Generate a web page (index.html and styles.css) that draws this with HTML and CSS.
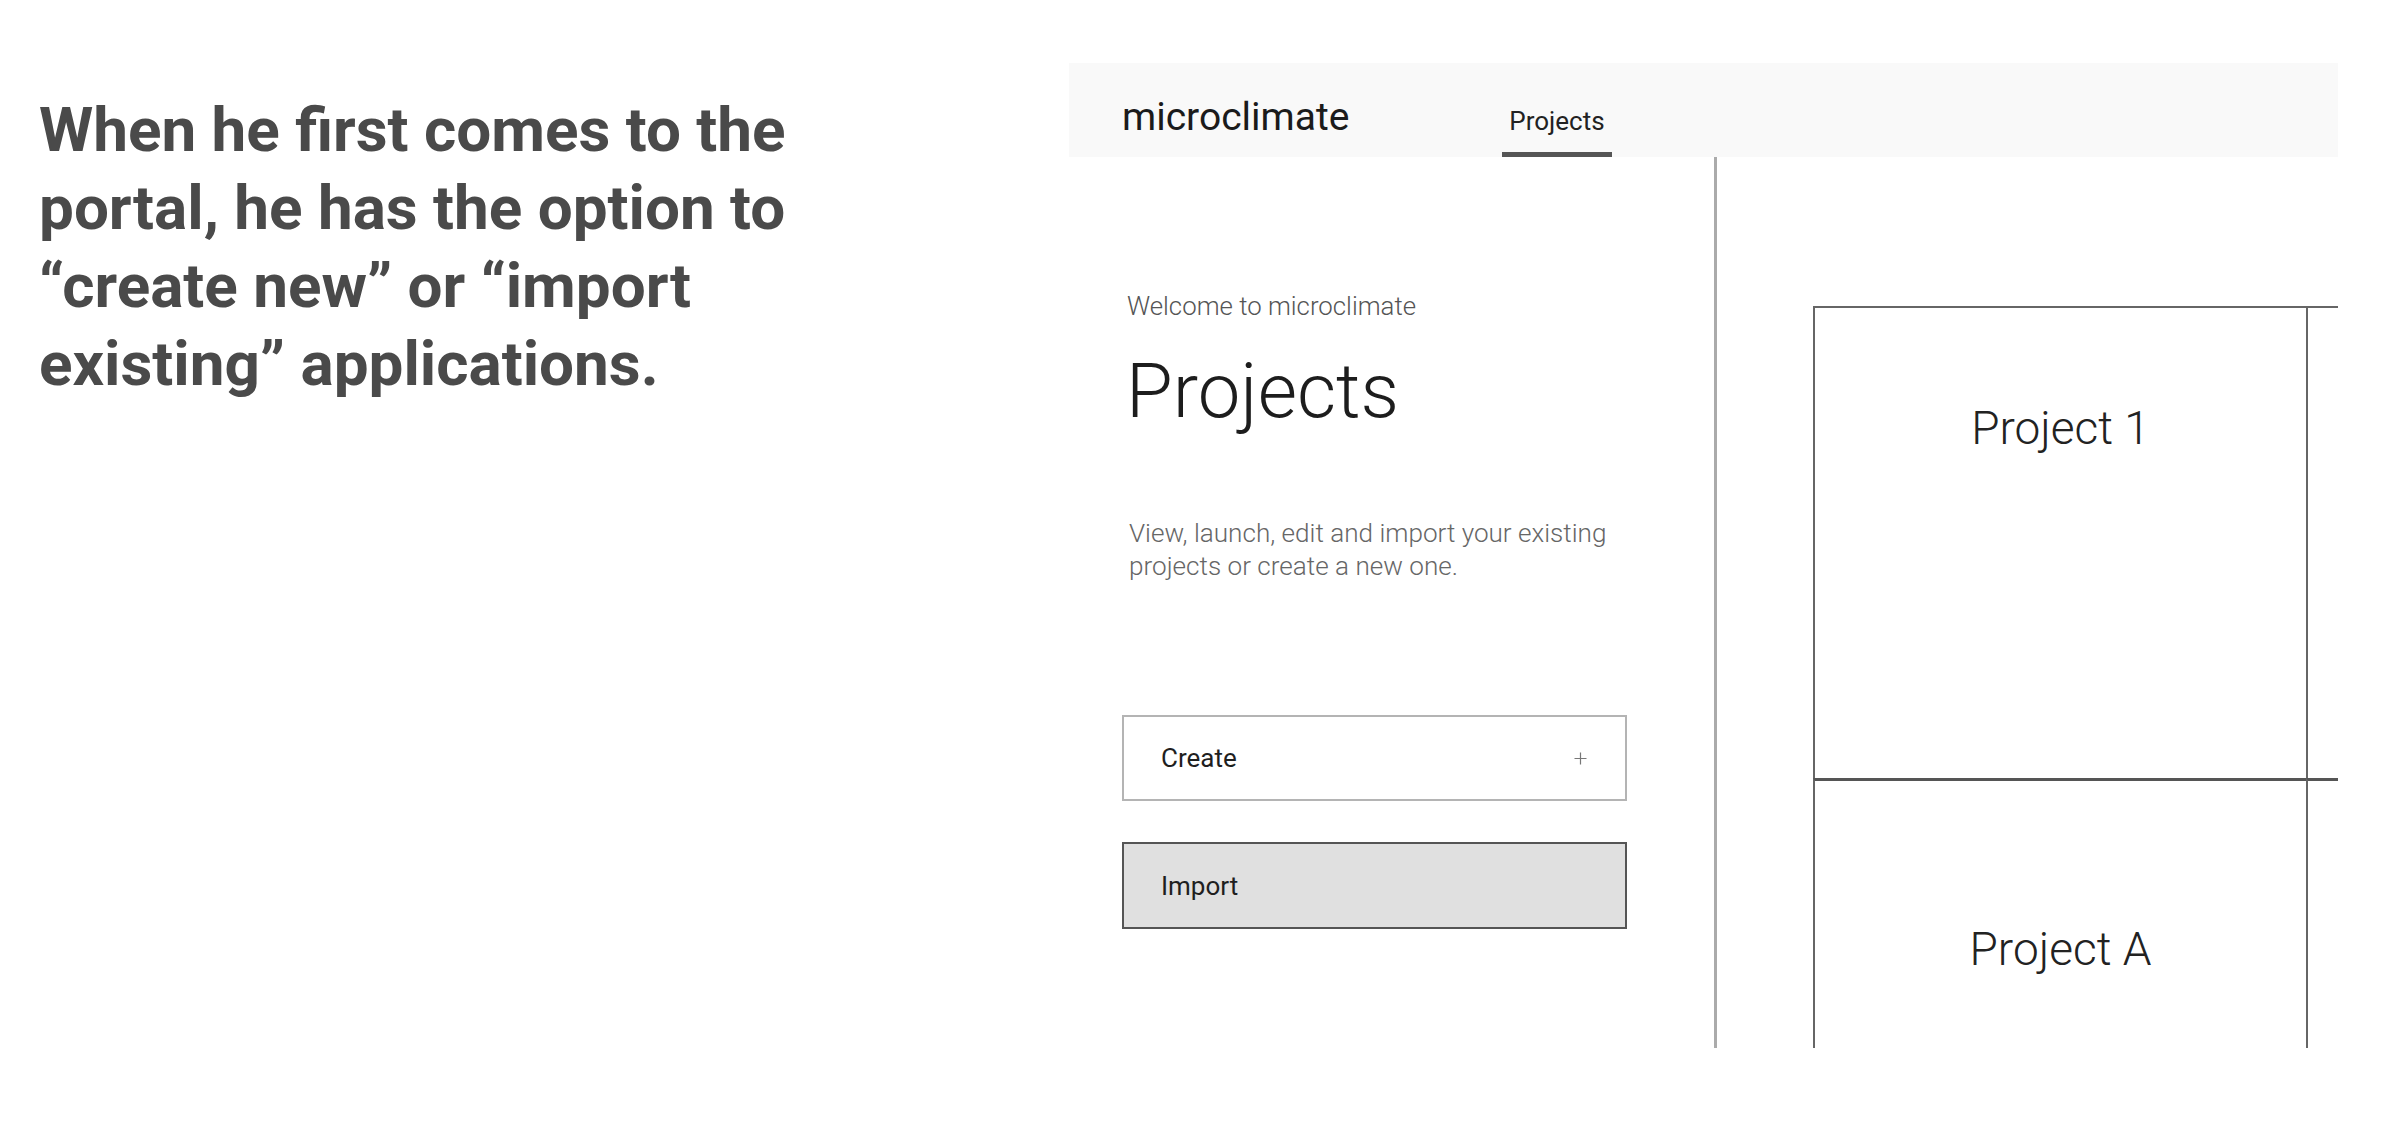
FILE: index.html
```html
<!DOCTYPE html>
<html lang="en">
<head>
<meta charset="utf-8">
<title>microclimate – Projects</title>
<link rel="stylesheet" href="styles.css">
</head>
<body>
<div class="page">
  <section class="intro">
    <p class="intro-text">When he first comes to the<br>portal, he has the option to<br>“create new” or “import<br>existing” applications.</p>
  </section>

  <section class="app">
    <header class="topbar">
      <div class="brand">microclimate</div>
      <nav class="tabs">
        <a class="tab tab-active">Projects</a>
      </nav>
    </header>

    <div class="main">
      <aside class="side">
        <div class="eyebrow">Welcome to microclimate</div>
        <h1 class="title">Projects</h1>
        <p class="desc">View, launch, edit and import your existing<br>projects or create a new one.</p>

        <div class="btn btn-create">
          <span class="btn-label">Create</span>
          <svg class="plus" width="13" height="13" viewBox="0 0 13 13" aria-hidden="true">
            <path d="M6.5 0.5V12.5M0.5 6.5H12.5" stroke="#777" stroke-width="1.2" fill="none"/>
          </svg>
        </div>
        <div class="btn btn-import">
          <span class="btn-label">Import</span>
        </div>
      </aside>

      <div class="content">
        <div class="cards">
          <div class="card card-r1"><div class="card-title card-title-1">Project 1</div></div>
          <div class="card card-r1"></div>
          <div class="card card-r2"><div class="card-title card-title-2">Project A</div></div>
          <div class="card card-r2"></div>
        </div>
      </div>
    </div>
  </section>
</div>
</body>
</html>
```

FILE: styles.css
```css
html, body {
  margin: 0;
  padding: 0;
  background: #ffffff;
}

body {
  font-family: Roboto, "Liberation Sans", Arial, sans-serif;
  color: #222;
}

.page {
  display: flex;
  align-items: flex-start;
  width: 2398px;
  height: 1138px;
  overflow: hidden;
}

/* ---------- left narrative ---------- */
.intro {
  width: 1069px;
  flex: none;
  box-sizing: border-box;
  padding-left: 39px;
  padding-top: 91px;
}

.intro-text {
  margin: 0;
  font-size: 62px;
  line-height: 78px;
  font-weight: 700;
  color: #4a4a4a;
}

/* ---------- app frame ---------- */
.app {
  flex: none;
  width: 1269px;
  height: 985px;
  margin-top: 63px;
  display: flex;
  flex-direction: column;
  overflow: hidden;
}

.topbar {
  flex: none;
  height: 94px;
  background: #f9f9f9;
  display: flex;
  align-items: flex-start;
  box-sizing: border-box;
  padding-left: 53px;
}

.brand {
  width: 380px;
  flex: none;
  padding-top: 34px;
  font-size: 39px;
  line-height: 40px;
  font-weight: 400;
  color: #1b1b1b;
}

.tabs {
  display: flex;
  height: 94px;
}

.tab {
  display: block;
  width: 110px;
  height: 94px;
  box-sizing: border-box;
  padding-top: 43px;
  text-align: center;
  font-size: 26px;
  line-height: 30px;
  color: #222;
}

.tab-active {
  border-bottom: 5px solid #555;
}

.main {
  flex: 1;
  display: flex;
  min-height: 0;
}

/* ---------- side panel ---------- */
.side {
  flex: none;
  width: 648px;
  box-sizing: border-box;
  border-right: 3px solid #ababab;
  padding-left: 53px;
  padding-top: 134px;
}

.eyebrow {
  margin-left: 5px;
  font-size: 25.8px;
  line-height: 30px;
  font-weight: 300;
  color: #555;
}

.title {
  margin: 30px 0 0 4px;
  font-size: 76px;
  line-height: 80px;
  font-weight: 300;
  color: #1d1d1d;
}

.desc {
  margin: 86px 0 0 7px;
  font-size: 26.1px;
  line-height: 33px;
  font-weight: 300;
  color: #666;
}

.btn {
  width: 505px;
  height: 86px;
  box-sizing: border-box;
  display: flex;
  align-items: center;
  justify-content: space-between;
  padding: 0 38px 0 37px;
}

.btn-label {
  font-size: 26px;
  line-height: 30px;
  color: #1f1f1f;
}

.btn-create {
  margin-top: 132px;
  border: 2px solid #b4b4b4;
  background: #fff;
}

.btn-import {
  margin-top: 41px;
  height: 87px;
  border: 2px solid #555;
  background: #e0e0e0;
}

.plus {
  display: block;
}

/* ---------- cards ---------- */
.content {
  flex: 1;
  min-width: 0;
  box-sizing: border-box;
  padding-left: 96px;
  padding-top: 149px;
  overflow: hidden;
}

.cards {
  display: grid;
  grid-template-columns: 493px 493px;
  grid-template-rows: 472px 472px;
}

.card {
  box-sizing: border-box;
  border-left: 2px solid #666;
  text-align: center;
}

.card-r1 {
  border-top: 2px solid #666;
}

.card-r2 {
  border-top: 3px solid #555;
}

.card-title {
  font-size: 46px;
  line-height: 52px;
  font-weight: 300;
  color: #222;
}

.card-title-1 {
  padding-top: 94px;
}

.card-title-2 {
  padding-top: 142px;
}
```
